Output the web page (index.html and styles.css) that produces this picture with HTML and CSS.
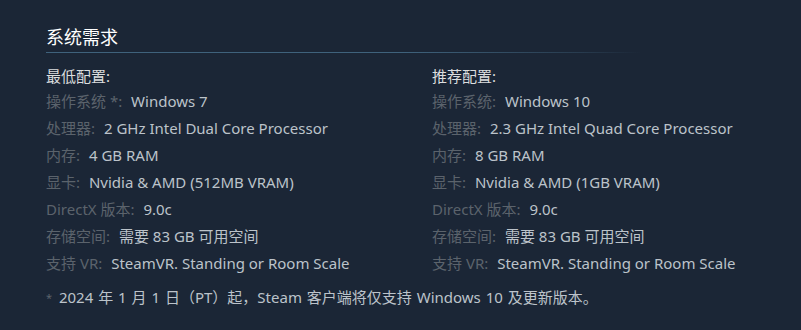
FILE: index.html
```html
<!DOCTYPE html>
<html lang="zh-CN">
<head>
<meta charset="utf-8">
<link rel="stylesheet" href="styles.css">
</head>
<body>
<div class="sysreq">
  <h2 class="heading">系统需求</h2>
  <div class="cols">
    <div class="col">
      <div class="col-title">最低配置:</div>
      <ul class="list">
        <li><span class="label">操作系统 *:</span> Windows 7</li>
        <li><span class="label">处理器:</span> 2 GHz Intel Dual Core Processor</li>
        <li><span class="label">内存:</span> 4 GB RAM</li>
        <li><span class="label">显卡:</span> Nvidia &amp; AMD (512MB VRAM)</li>
        <li><span class="label">DirectX 版本:</span> 9.0c</li>
        <li><span class="label">存储空间:</span> 需要 83 GB 可用空间</li>
        <li><span class="label">支持 VR:</span> SteamVR. Standing or Room Scale</li>
      </ul>
    </div>
    <div class="col">
      <div class="col-title">推荐配置:</div>
      <ul class="list">
        <li><span class="label">操作系统:</span> Windows 10</li>
        <li><span class="label">处理器:</span> 2.3 GHz Intel Quad Core Processor</li>
        <li><span class="label">内存:</span> 8 GB RAM</li>
        <li><span class="label">显卡:</span> Nvidia &amp; AMD (1GB VRAM)</li>
        <li><span class="label">DirectX 版本:</span> 9.0c</li>
        <li><span class="label">存储空间:</span> 需要 83 GB 可用空间</li>
        <li><span class="label">支持 VR:</span> SteamVR. Standing or Room Scale</li>
      </ul>
    </div>
  </div>
  <p class="note"><span class="star">*</span> 2024 年 1 月 1 日（PT）起，Steam 客户端将仅支持 Windows 10 及更新版本。</p>
</div>
</body>
</html>
```
FILE: styles.css
```css
html, body {
  margin: 0;
  padding: 0;
  background: #1b2636;
}
body {
  font-family: "Noto Sans", "Noto Sans CJK SC", sans-serif;
  color: #b8bfc6;
  width: 801px;
  height: 330px;
  overflow: hidden;
}
.sysreq {
  padding: 24px 0 0 46px;
}
.heading {
  margin: 0;
  font-size: 18px;
  font-weight: normal;
  color: #ffffff;
  line-height: 26px;
  padding-bottom: 2px;
  width: 594px;
  border-bottom: 1px solid transparent;
  border-image: linear-gradient(to right, #3f627c 0%, #3f627c 60%, rgba(63,98,124,0.35) 90%, rgba(63,98,124,0) 100%) 1;
}
.cols {
  display: grid;
  grid-template-columns: 386px 386px;
  margin-top: 11px;
}
.col-title {
  font-size: 15px;
  color: #dcdedf;
  line-height: 24px;
}
.list {
  list-style: none;
  margin: 0;
  padding: 0;
}
.list li {
  font-size: 15px;
  line-height: 27px;
  color: #bcc3ca;
  white-space: nowrap;
}
.label {
  color: #5b636c;
  margin-right: 5px;
}
.note {
  margin: 7px 0 0;
  font-size: 15px;
  line-height: 27px;
  color: #bcc3ca;
  word-spacing: 1px;
}
.star {
  color: #5b636c;
  font-size: 11px;
  vertical-align: top;
  margin-right: 2px;
}
```
